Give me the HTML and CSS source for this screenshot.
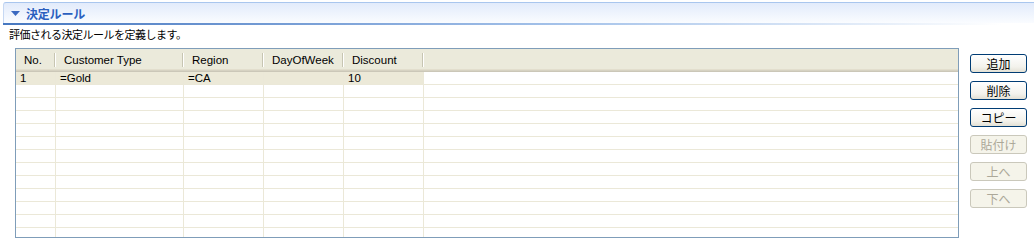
FILE: index.html
```html
<!DOCTYPE html>
<html lang="ja">
<head>
    <meta charset="UTF-8">
    <title>決定ルール</title>
    <link rel="stylesheet" href="styles.css">
</head>
<body>

<div class="section-header">
    <svg class="twisty" width="9" height="5" viewBox="0 0 9 5"><path d="M0 0H9L4.5 5Z" fill="#3a69c0"/></svg>
    <span class="section-title">決定ルール</span>
</div>
<div class="section-rule"></div>
<p class="section-desc">評価される決定ルールを定義します。</p>

<div class="section-body">
    <div class="grid-wrap">
        <div class="grid-row grid-head">
            <div class="cell">No.</div>
            <div class="cell">Customer Type</div>
            <div class="cell">Region</div>
            <div class="cell">DayOfWeek</div>
            <div class="cell">Discount</div>
            <div class="cell filler"></div>
        </div>
        <div class="grid-row selected">
            <div class="cell">1</div>
            <div class="cell">=Gold</div>
            <div class="cell">=CA</div>
            <div class="cell"></div>
            <div class="cell">10</div>
            <div class="cell filler"></div>
        </div>
        <!-- empty rows filled by script below -->
        <div id="emptyRows"></div>
    </div>

    <div class="button-col">
        <button>追加</button>
        <button>削除</button>
        <button>コピー</button>
        <button disabled>貼付け</button>
        <button disabled>上へ</button>
        <button disabled>下へ</button>
    </div>
</div>

<script>
    const holder = document.getElementById('emptyRows');
    for (let i = 0; i < 12; i++) {
        const row = document.createElement('div');
        row.className = 'grid-row';
        for (let c = 0; c < 6; c++) {
            const cell = document.createElement('div');
            cell.className = c === 5 ? 'cell filler' : 'cell';
            row.appendChild(cell);
        }
        holder.appendChild(row);
    }
</script>

</body>
</html>
```

FILE: styles.css
```css
body {
    margin: 0;
    font-family: "Liberation Sans", "Noto Sans CJK JP", sans-serif;
    font-size: 12px;
    color: #000;
    background: #fff;
}
.section-header {
    margin: 2px 1px 0 3px;
    height: 20px;
    border-top: 1px solid #a9c6ee;
    border-left: 1px solid #c6d8f3;
    border-top-left-radius: 3px;
    background: linear-gradient(#e2ebfb, #fafcff);
    display: flex;
    align-items: center;
    padding-left: 7px;
}
.twisty {
    margin-right: 6px;
    margin-top: 1px;
}
.section-title {
    font-family: "Noto Sans CJK JP", sans-serif;
    font-weight: bold;
    font-size: 12px;
    color: #2b5fbf;
    letter-spacing: -0.2px;
}
.section-rule {
    margin: 0 1px 0 3px;
    height: 2px;
    background: linear-gradient(to right, #4677c0, #a6c3ea 55%, rgba(255, 255, 255, 0) 97%);
}
.section-desc {
    margin: 2px 0 0 9px;
    font-family: "Noto Sans CJK JP", sans-serif;
    font-size: 11px;
    line-height: 14px;
    letter-spacing: -0.5px;
}
.section-body {
    display: flex;
    margin-top: 7px;
    padding-left: 15px;
}
.grid-wrap {
    width: 944px;
    height: 190px;
    box-sizing: border-box;
    border: 1px solid #7f9db9;
    overflow: hidden;
    background: #fff;
}
.grid-row {
    display: grid;
    grid-template-columns: 40px 128px 80px 80px 80px 1fr;
    height: 13px;
    border-bottom: 1px solid #ebe8d8;
    box-sizing: border-box;
    font-size: 11.5px;
    line-height: 12px;
}
.cell {
    border-right: 1px solid #ebe8d8;
    padding-left: 4px;
    white-space: nowrap;
    overflow: hidden;
}
.cell.filler {
    border-right: none;
}
.selected .cell {
    background: #ece9d8;
}
.selected .cell.filler {
    background: #fff;
}
.grid-head {
    height: 23px;
    border-bottom: none;
    background: #ebeadb;
    box-shadow: inset 0 -1px #cbc7b8, inset 0 -2px #d6d2c2, inset 0 -3px #e2decd;
    line-height: 17px;
    padding-top: 3px;
}
.grid-head .cell {
    position: relative;
    border-right: none;
    padding-left: 8px;
}
.grid-head .cell::after {
    content: "";
    position: absolute;
    right: 1px;
    top: 1px;
    width: 1px;
    height: 14px;
    background: #c7c5b2;
    box-shadow: 1px 0 #fff;
}
.grid-head .cell.filler::after {
    display: none;
}
.button-col {
    display: flex;
    flex-direction: column;
    gap: 8px;
    margin-left: 11px;
    padding-top: 6px;
}
button {
    width: 57px;
    height: 19px;
    padding: 0;
    border: 1px solid #003c74;
    border-radius: 3px;
    background: linear-gradient(#ffffff, #f3f2ec 70%, #e3e0d4);
    font-family: "Noto Sans CJK JP", sans-serif;
    font-size: 12px;
    line-height: 16px;
    color: #000;
}
button:disabled {
    border-color: #cac8bb;
    background: #f5f4ea;
    color: #aca899;
}
```
